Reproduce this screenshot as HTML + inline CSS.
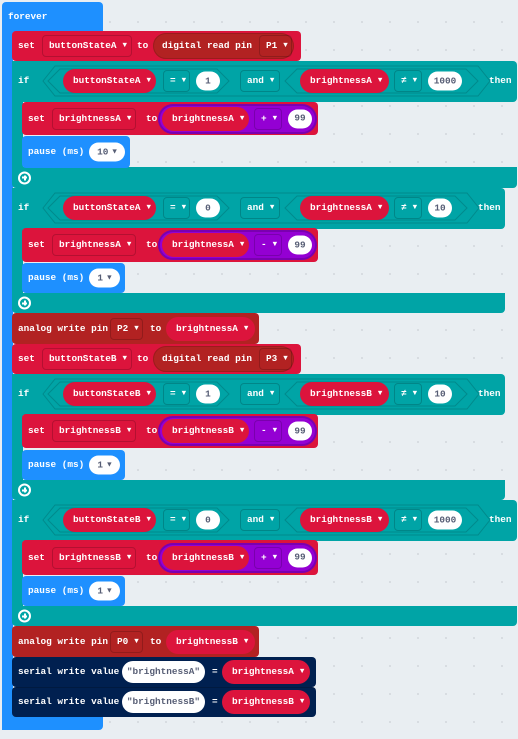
<!DOCTYPE html>
<html><head><meta charset="utf-8"><style>
*{margin:0;padding:0;box-sizing:border-box}
body{width:518px;height:739px;overflow:hidden;background:#e9eef2;background-image:radial-gradient(#d6dbe0 1px,transparent 1.2px);background-size:28px 28px;background-position:12px 8px;position:relative;font:bold 9.4px "Liberation Mono",monospace;color:#fff}
.b{position:absolute}
.row{position:absolute;left:0;width:518px}
.row>*{position:absolute;top:50%;transform:translateY(-50%);white-space:nowrap;line-height:12px}
.dd{height:22px;border:1px solid rgba(0,0,0,.18);border-radius:4px;display:flex;align-items:center;padding-left:6px}
.dd s,.p s{text-decoration:none;font-size:7.5px;margin-left:6px}
.p{height:24px;border-radius:12px;background:#dc143c;display:flex;align-items:center;padding-left:10px}
.n{height:19px;border-radius:10px;background:#fff;color:#575e75;display:flex;align-items:center;justify-content:center}
.n s{text-decoration:none;font-size:7.5px;margin-left:4px;color:#575e75}
.pu{height:30px;border-radius:15px;background:#9400d3;border:2px solid #7a00b0}
.pin{height:26px;border-radius:13px;background:#b22222;border:1px solid #9a1c1c;display:flex;align-items:center;padding-left:8px}
.plus{width:13px;height:13px;border:2px solid #fff;border-radius:50%}
.plus:before{content:"";position:absolute;left:2px;top:3.5px;width:5px;height:2px;background:#fff}
.plus:after{content:"";position:absolute;left:3.5px;top:2px;width:2px;height:5px;background:#fff}
.str{height:22px;border-radius:11px;background:#fff;color:#575e75;display:flex;align-items:center;justify-content:center}
</style></head><body>

<div class="b" style="left:2px;top:2px;width:101px;height:30px;background:#1e90ff;border-radius:4px 4px 0 0"></div>
<div class="b" style="left:2px;top:30px;width:11px;height:700px;background:#1e90ff"></div>
<div class="b" style="left:2px;top:716px;width:101px;height:14px;background:#1e90ff;border-radius:0 0 4px 4px"></div>
<div class="row" style="top:2px;height:30px"><span style="left:8px">forever</span></div>

<div class="b" style="left:12px;top:61px;width:505px;height:41px;background:#00a4a6;border-radius:0 4px 4px 0"></div>
<div class="b" style="left:12px;top:100px;width:11px;height:70px;background:#00a4a6"></div>
<div class="b" style="left:12px;top:167px;width:505px;height:21px;background:#00a4a6;border-radius:0 0 4px 4px"></div>
<div class="b" style="left:12px;top:188px;width:493px;height:41px;background:#00a4a6;border-radius:0 4px 4px 0"></div>
<div class="b" style="left:12px;top:227px;width:11px;height:70px;background:#00a4a6"></div>
<div class="b" style="left:12px;top:293px;width:493px;height:20px;background:#00a4a6;border-radius:0 0 4px 4px"></div>
<div class="b" style="left:12px;top:374px;width:493px;height:41px;background:#00a4a6;border-radius:0 4px 4px 0"></div>
<div class="b" style="left:12px;top:413px;width:11px;height:70px;background:#00a4a6"></div>
<div class="b" style="left:12px;top:480px;width:493px;height:20px;background:#00a4a6;border-radius:0 0 4px 4px"></div>
<div class="b" style="left:12px;top:500px;width:505px;height:41px;background:#00a4a6;border-radius:0 4px 4px 0"></div>
<div class="b" style="left:12px;top:539px;width:11px;height:70px;background:#00a4a6"></div>
<div class="b" style="left:12px;top:606px;width:505px;height:20px;background:#00a4a6;border-radius:0 0 4px 4px"></div>

<svg class="b" style="left:0;top:0" width="518" height="739">
<g fill="none" stroke="#008a8c" stroke-width="1">
<polygon points="43,81 55,66 478,66 490,81 478,96 55,96"/>
<polygon points="48,81 60,69 217,69 229,81 217,93 60,93"/>
<polygon points="285,81 297,69 466,69 478,81 466,93 297,93"/>
<polygon points="43,208 55,193 467,193 479,208 467,223 55,223"/>
<polygon points="48,208 60,196 217,196 229,208 217,220 60,220"/>
<polygon points="285,208 297,196 455,196 467,208 455,220 297,220"/>
<polygon points="43,394 55,379 467,379 479,394 467,409 55,409"/>
<polygon points="48,394 60,382 217,382 229,394 217,406 60,406"/>
<polygon points="285,394 297,382 455,382 467,394 455,406 297,406"/>
<polygon points="43,520 55,505 478,505 490,520 478,535 55,535"/>
<polygon points="48,520 60,508 217,508 229,520 217,532 60,532"/>
<polygon points="285,520 297,508 466,508 478,520 466,532 297,532"/>
</g></svg>

<div class="b" style="left:12px;top:31px;width:289px;height:30px;background:#dc143c;border-radius:4px"></div>
<div class="row" style="top:31px;height:30px">
<span style="left:18px">set</span>
<div class="dd" style="left:42px;width:90px">buttonStateA<s>▼</s></div>
<span style="left:137px">to</span>
<div class="pin" style="left:153px;width:141px">digital read pin<div class="dd" style="margin-left:7px;width:33px">P1<s>▼</s></div></div>
</div>

<div class="row" style="top:61px;height:40px">
<span style="left:18px">if</span>
<div class="p" style="left:63px;width:93px">buttonStateA<s>▼</s></div>
<div class="dd" style="left:163px;width:27px">=<s>▼</s></div>
<div class="n" style="left:196px;width:24px">1</div>
<div class="dd" style="left:240px;width:40px">and<s>▼</s></div>
<div class="p" style="left:300px;width:89px">brightnessA<s>▼</s></div>
<div class="dd" style="left:394px;width:28px">≠<s>▼</s></div>
<div class="n" style="left:428px;width:34px">1000</div>
<span style="left:489px">then</span>
</div>
<div class="b" style="left:22px;top:102px;width:296px;height:33px;background:#dc143c;border-radius:4px"></div>
<div class="row" style="top:102px;height:33px">
<span style="left:28px">set</span>
<div class="dd" style="left:52px;width:84px">brightnessA<s>▼</s></div>
<span style="left:146px">to</span>
<div class="pu" style="left:158px;width:159px"></div>
<div class="p" style="left:162px;width:87px">brightnessA<s>▼</s></div>
<div class="dd" style="left:254px;width:28px">+<s>▼</s></div>
<div class="n" style="left:288px;width:24px">99</div>
</div>
<div class="b" style="left:22px;top:136px;width:108px;height:32px;background:#1e90ff;border-radius:4px"></div>
<div class="row" style="top:136px;height:32px">
<span style="left:28px">pause (ms)</span>
<div class="n" style="left:89px;width:36px">10<s>▼</s></div>
</div>
<div class="row" style="top:167px;height:21px"><div class="plus" style="left:18px"></div></div>

<div class="row" style="top:188px;height:40px">
<span style="left:18px">if</span>
<div class="p" style="left:63px;width:93px">buttonStateA<s>▼</s></div>
<div class="dd" style="left:163px;width:27px">=<s>▼</s></div>
<div class="n" style="left:196px;width:24px">0</div>
<div class="dd" style="left:240px;width:40px">and<s>▼</s></div>
<div class="p" style="left:300px;width:89px">brightnessA<s>▼</s></div>
<div class="dd" style="left:394px;width:28px">≠<s>▼</s></div>
<div class="n" style="left:428px;width:24px">10</div>
<span style="left:478px">then</span>
</div>
<div class="b" style="left:22px;top:228px;width:296px;height:34px;background:#dc143c;border-radius:4px"></div>
<div class="row" style="top:228px;height:34px">
<span style="left:28px">set</span>
<div class="dd" style="left:52px;width:84px">brightnessA<s>▼</s></div>
<span style="left:146px">to</span>
<div class="pu" style="left:158px;width:159px"></div>
<div class="p" style="left:162px;width:87px">brightnessA<s>▼</s></div>
<div class="dd" style="left:254px;width:28px">-<s>▼</s></div>
<div class="n" style="left:288px;width:24px">99</div>
</div>
<div class="b" style="left:22px;top:263px;width:103px;height:30px;background:#1e90ff;border-radius:4px"></div>
<div class="row" style="top:263px;height:30px">
<span style="left:28px">pause (ms)</span>
<div class="n" style="left:89px;width:31px">1<s>▼</s></div>
</div>
<div class="row" style="top:293px;height:20px"><div class="plus" style="left:18px"></div></div>

<div class="b" style="left:12px;top:313px;width:247px;height:31px;background:#b22222;border-radius:4px"></div>
<div class="row" style="top:313px;height:31px">
<span style="left:18px">analog write pin</span>
<div class="dd" style="left:110px;width:33px">P2<s>▼</s></div>
<span style="left:150px">to</span>
<div class="p" style="left:166px;width:89px">brightnessA<s>▼</s></div>
</div>

<div class="b" style="left:12px;top:344px;width:289px;height:30px;background:#dc143c;border-radius:4px"></div>
<div class="row" style="top:344px;height:30px">
<span style="left:18px">set</span>
<div class="dd" style="left:42px;width:90px">buttonStateB<s>▼</s></div>
<span style="left:137px">to</span>
<div class="pin" style="left:153px;width:141px">digital read pin<div class="dd" style="margin-left:7px;width:33px">P3<s>▼</s></div></div>
</div>

<div class="row" style="top:374px;height:40px">
<span style="left:18px">if</span>
<div class="p" style="left:63px;width:93px">buttonStateB<s>▼</s></div>
<div class="dd" style="left:163px;width:27px">=<s>▼</s></div>
<div class="n" style="left:196px;width:24px">1</div>
<div class="dd" style="left:240px;width:40px">and<s>▼</s></div>
<div class="p" style="left:300px;width:89px">brightnessB<s>▼</s></div>
<div class="dd" style="left:394px;width:28px">≠<s>▼</s></div>
<div class="n" style="left:428px;width:24px">10</div>
<span style="left:478px">then</span>
</div>
<div class="b" style="left:22px;top:414px;width:296px;height:34px;background:#dc143c;border-radius:4px"></div>
<div class="row" style="top:414px;height:34px">
<span style="left:28px">set</span>
<div class="dd" style="left:52px;width:84px">brightnessB<s>▼</s></div>
<span style="left:146px">to</span>
<div class="pu" style="left:158px;width:159px"></div>
<div class="p" style="left:162px;width:87px">brightnessB<s>▼</s></div>
<div class="dd" style="left:254px;width:28px">-<s>▼</s></div>
<div class="n" style="left:288px;width:24px">99</div>
</div>
<div class="b" style="left:22px;top:450px;width:103px;height:30px;background:#1e90ff;border-radius:4px"></div>
<div class="row" style="top:450px;height:30px">
<span style="left:28px">pause (ms)</span>
<div class="n" style="left:89px;width:31px">1<s>▼</s></div>
</div>
<div class="row" style="top:480px;height:20px"><div class="plus" style="left:18px"></div></div>

<div class="row" style="top:500px;height:40px">
<span style="left:18px">if</span>
<div class="p" style="left:63px;width:93px">buttonStateB<s>▼</s></div>
<div class="dd" style="left:163px;width:27px">=<s>▼</s></div>
<div class="n" style="left:196px;width:24px">0</div>
<div class="dd" style="left:240px;width:40px">and<s>▼</s></div>
<div class="p" style="left:300px;width:89px">brightnessB<s>▼</s></div>
<div class="dd" style="left:394px;width:28px">≠<s>▼</s></div>
<div class="n" style="left:428px;width:34px">1000</div>
<span style="left:489px">then</span>
</div>
<div class="b" style="left:22px;top:540px;width:296px;height:35px;background:#dc143c;border-radius:4px"></div>
<div class="row" style="top:540px;height:35px">
<span style="left:28px">set</span>
<div class="dd" style="left:52px;width:84px">brightnessB<s>▼</s></div>
<span style="left:146px">to</span>
<div class="pu" style="left:158px;width:159px"></div>
<div class="p" style="left:162px;width:87px">brightnessB<s>▼</s></div>
<div class="dd" style="left:254px;width:28px">+<s>▼</s></div>
<div class="n" style="left:288px;width:24px">99</div>
</div>
<div class="b" style="left:22px;top:576px;width:103px;height:30px;background:#1e90ff;border-radius:4px"></div>
<div class="row" style="top:576px;height:30px">
<span style="left:28px">pause (ms)</span>
<div class="n" style="left:89px;width:31px">1<s>▼</s></div>
</div>
<div class="row" style="top:606px;height:20px"><div class="plus" style="left:18px"></div></div>

<div class="b" style="left:12px;top:626px;width:247px;height:31px;background:#b22222;border-radius:4px"></div>
<div class="row" style="top:626px;height:31px">
<span style="left:18px">analog write pin</span>
<div class="dd" style="left:110px;width:33px">P0<s>▼</s></div>
<span style="left:150px">to</span>
<div class="p" style="left:166px;width:89px">brightnessB<s>▼</s></div>
</div>

<div class="b" style="left:12px;top:657px;width:304px;height:30px;background:#002050;border-radius:4px"></div>
<div class="row" style="top:657px;height:30px">
<span style="left:18px">serial write value</span>
<div class="str" style="left:122px;width:83px">"brightnessA"</div>
<span style="left:212px">=</span>
<div class="p" style="left:222px;width:88px">brightnessA<s>▼</s></div>
</div>
<div class="b" style="left:12px;top:687px;width:304px;height:30px;background:#002050;border-radius:4px;border-top:1px solid #001a40"></div>
<div class="row" style="top:687px;height:30px">
<span style="left:18px">serial write value</span>
<div class="str" style="left:122px;width:83px">"brightnessB"</div>
<span style="left:212px">=</span>
<div class="p" style="left:222px;width:88px">brightnessB<s>▼</s></div>
</div>
</body></html>
